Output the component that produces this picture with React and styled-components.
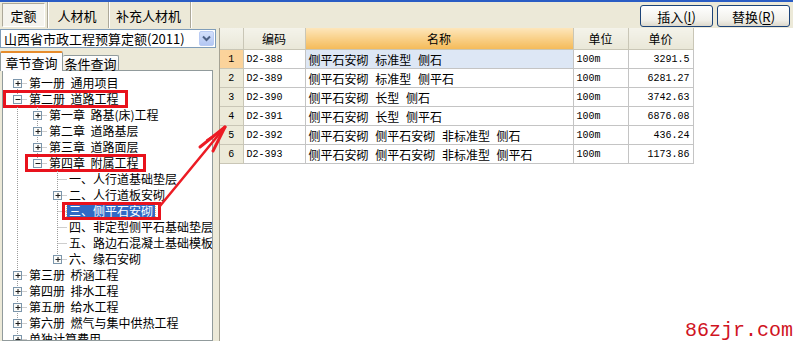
import React from 'react';
import styled, { createGlobalStyle } from 'styled-components';

const GlobalStyle = createGlobalStyle`
  html, body {
    margin: 0;
    padding: 0;
    background: #fff;
  }
  body {
    font-family: "Noto Sans CJK SC", "Noto Sans", sans-serif;
    font-size: 12px;
    color: #000;
  }
`;

const mainTabs = [
    { label: '定额', width: 46, active: true },
    { label: '人材机', width: 61 },
    { label: '补充人材机', width: 82 },
];

const tree = [
    { label: '第一册  通用项目', children: true },
    {
        label: '第二册  道路工程', open: true, mark: [0, 125],
        children: [
            { label: '第一章  路基(床)工程', children: true },
            { label: '第二章  道路基层', children: true },
            { label: '第三章  道路面层', children: true },
            {
                label: '第四章  附属工程', open: true, mark: [22, 121],
                children: [
                    { label: '一、人行道基础垫层' },
                    { label: '二、人行道板安砌', children: true },
                    { label: '三、侧平石安砌', selected: true, mark: [59, 99] },
                    { label: '四、非定型侧平石基础垫层' },
                    { label: '五、路边石混凝土基础模板' },
                    { label: '六、缘石安砌', children: true },
                ],
            },
        ],
    },
    { label: '第三册  桥涵工程', children: true },
    { label: '第四册  排水工程', children: true },
    { label: '第五册  给水工程', children: true },
    { label: '第六册  燃气与集中供热工程', children: true },
    { label: '单独计算费用', children: true, more: true },
];

const rows = [
    ['D2-388', '侧平石安砌 标准型 侧石', '100m', '3291.5'],
    ['D2-389', '侧平石安砌 标准型 侧平石', '100m', '6281.27'],
    ['D2-390', '侧平石安砌 长型 侧石', '100m', '3742.63'],
    ['D2-391', '侧平石安砌 长型 侧平石', '100m', '6876.08'],
    ['D2-392', '侧平石安砌 侧平石安砌 非标准型 侧石', '100m', '436.24'],
    ['D2-393', '侧平石安砌 侧平石安砌 非标准型 侧平石', '100m', '1173.86'],
];

// turn the nested tree into visible rows, keeping which guide lines run through each row
const flatten = (nodes, level, guides, out) => {
    nodes.forEach((node, i) => {
        const last = i === nodes.length - 1 && !node.more;
        out.push({ ...node, level, guides, last, first: level === 0 && i === 0 });
        if (node.open && Array.isArray(node.children)) {
            flatten(node.children, level + 1, [...guides, !last], out);
        }
    });
    return out;
};

const treeRows = flatten(tree, 0, [], []);

const DOT = '#9c9c9c';

const Connector = ({ level, guides, first, last, children, open }) => {
    const w = 24 + level * 20;
    const xc = 14.5 + level * 20;
    return (
        <svg width={w} height={16} style={{ flex: 'none' }}>
            {guides.map((g, d) => g && (
                <line key={d} x1={14.5 + d * 20} x2={14.5 + d * 20} y1={0} y2={16}
                      stroke={DOT} strokeDasharray="1 1"/>
            ))}
            <line x1={xc} x2={xc} y1={first ? 8 : 0} y2={last ? 8 : 16} stroke={DOT} strokeDasharray="1 1"/>
            <line x1={xc} x2={w} y1={8.5} y2={8.5} stroke={DOT} strokeDasharray="1 1"/>
            {children && (
                <g>
                    <rect x={xc - 4} y={4.5} width={8} height={8} fill="#fbfbf8" stroke="#7c96ac"/>
                    <line x1={xc - 2} x2={xc + 3} y1={8.5} y2={8.5} stroke="#1a1a1a"/>
                    {!open && <line x1={xc + 0.5} x2={xc + 0.5} y1={6} y2={11} stroke="#1a1a1a"/>}
                </g>
            )}
        </svg>
    );
};

const App = () => {
    return (
        <>
            <GlobalStyle/>
            <Root>
                <TitleLine/>
                <TopBar>
                    <MainTabs>
                        {mainTabs.map(tab =>
                            <TabCell $w={tab.width} key={tab.label}>
                                <TabFace $active={tab.active}>{tab.label}</TabFace>
                            </TabCell>
                        )}
                    </MainTabs>
                    <Actions>
                        <Button>插入(<u>I</u>)</Button>
                        <Button>替换(<u>R</u>)</Button>
                    </Actions>
                </TopBar>
                <Body>
                    <LeftPanel>
                        <Combo>
                            <ComboText>山西省市政工程预算定额(2011)</ComboText>
                            <ComboButton>
                                <svg width="9" height="7" viewBox="0 0 9 7">
                                    <path d="M1 1.5 L4.5 5 L8 1.5" fill="none" stroke="#4d6185" strokeWidth="2"/>
                                </svg>
                            </ComboButton>
                        </Combo>
                        <SubTabs>
                            <SubTab $active>章节查询</SubTab>
                            <SubTab>条件查询</SubTab>
                        </SubTabs>
                        <TreeBox>
                            {treeRows.map((row, key) =>
                                <TreeRow key={key}>
                                    <Connector {...row}/>
                                    <TreeLabel $selected={row.selected}>{row.label}</TreeLabel>
                                    {row.mark && <Mark $left={row.mark[0]} $width={row.mark[1]}/>}
                                </TreeRow>
                            )}
                        </TreeBox>
                    </LeftPanel>
                    <GridArea>
                        <Table>
                            <colgroup>
                                <col style={{ width: 23 }}/>
                                <col style={{ width: 62 }}/>
                                <col style={{ width: 268 }}/>
                                <col style={{ width: 55 }}/>
                                <col style={{ width: 65 }}/>
                            </colgroup>
                            <thead>
                                <tr>
                                    <HeadCell/>
                                    <HeadCell>编码</HeadCell>
                                    <HeadCell $active>名称</HeadCell>
                                    <HeadCell>单位</HeadCell>
                                    <HeadCell>单价</HeadCell>
                                </tr>
                            </thead>
                            <tbody>
                                {rows.map((row, i) =>
                                    <tr key={row[0]}>
                                        <NumCell $current={i === 0}>{i + 1}</NumCell>
                                        <Cell $mono>{row[0]}</Cell>
                                        <Cell $current={i === 0}>{row[1]}</Cell>
                                        <Cell $mono>{row[2]}</Cell>
                                        <Cell $mono $right>{row[3]}</Cell>
                                    </tr>
                                )}
                            </tbody>
                        </Table>
                        <Watermark>86zjr.com</Watermark>
                    </GridArea>
                </Body>
                <Arrow width="793" height="341" viewBox="0 0 793 341">
                    <g stroke="#ec1c24" strokeLinecap="round" fill="none">
                        <line x1="160" y1="206" x2="225" y2="127" strokeWidth="2.5"/>
                        <line x1="200" y1="147" x2="225" y2="127" strokeWidth="3"/>
                        <line x1="213" y1="151" x2="225" y2="127" strokeWidth="3"/>
                        <line x1="207" y1="140" x2="224" y2="129" strokeWidth="2"/>
                    </g>
                </Arrow>
            </Root>
        </>
    );
};

export default App;


const Root = styled.div`
    position: relative;
    width: 793px;
    height: 341px;
    overflow: hidden;
    display: flex;
    flex-direction: column;
    background: #ece9d8;
`;

const TitleLine = styled.div`
    height: 2px;
    background: #2a5cc4;
    flex: none;
`;

const TopBar = styled.div`
    height: 26px;
    flex: none;
    display: flex;
    justify-content: space-between;
`;

const MainTabs = styled.div`
    display: flex;
    padding-left: 2px;
`;

const TabCell = styled.div`
    width: ${props => props.$w}px;
    box-sizing: border-box;
    display: flex;
    padding: 1px 2px 1px 0;
    border-right: 1px solid #aca899;
    box-shadow: 1px 0 0 #fff;
`;

const TabFace = styled.div`
    flex: 1;
    display: flex;
    align-items: center;
    justify-content: center;
    font-size: 13px;
    border: 1px solid transparent;
    ${props => props.$active && `
        border-color: #aca899 #fff #fff #aca899;
        background: #f5f4ee;
    `}
`;

const Actions = styled.div`
    display: flex;
    gap: 4px;
    padding: 3px 3px 0 0;
`;

const Button = styled.div`
    width: 73px;
    height: 22px;
    box-sizing: border-box;
    border: 1px solid #1c4378;
    border-radius: 3px;
    background: linear-gradient(#ffffff, #f1f0ea 70%, #dcd8cb);
    display: flex;
    align-items: center;
    justify-content: center;
    font-size: 13px;
    
    u {
        text-underline-offset: 2px;
    }
`;

const Body = styled.div`
    flex: 1;
    min-height: 0;
    display: flex;
`;

const LeftPanel = styled.div`
    width: 216px;
    flex: none;
    display: flex;
    flex-direction: column;
    padding-top: 1px;
`;

const Combo = styled.div`
    height: 19px;
    box-sizing: border-box;
    border: 1px solid #7f9db9;
    background: #fff;
    display: flex;
    align-items: center;
`;

const ComboText = styled.div`
    flex: 1;
    padding-left: 3px;
    font-size: 13px;
    line-height: 17px;
    white-space: nowrap;
`;

const ComboButton = styled.div`
    width: 15px;
    height: 15px;
    margin-right: 1px;
    border-radius: 2px;
    background: linear-gradient(#d4e0fb, #b3c7f3);
    border: 1px solid #b9cbf3;
    box-sizing: border-box;
    display: flex;
    align-items: center;
    justify-content: center;
`;

const SubTabs = styled.div`
    height: 19px;
    margin-top: 3px;
    display: flex;
    align-items: flex-end;
    position: relative;
    z-index: 1;
`;

const SubTab = styled.div`
    box-sizing: border-box;
    font-size: 13px;
    display: flex;
    align-items: center;
    justify-content: center;
    border: 1px solid #919b9c;
    border-bottom: none;
    border-radius: 2px 2px 0 0;
    white-space: nowrap;
    ${props => props.$active ? `
        width: 63px;
        height: 20px;
        margin-bottom: -1px;
        background: #fcfcfe;
        border-top: 2px solid #e68b2c;
    ` : `
        width: 56px;
        height: 15px;
        border-left: none;
        background: linear-gradient(#ffffff, #ecebe6);
    `}
`;

const TreeBox = styled.div`
    flex: 1;
    margin: 0 3px 0 2px;
    background: #fff;
    border: 1px solid #919b9c;
    padding-top: 4px;
    overflow: hidden;
`;

const TreeRow = styled.div`
    position: relative;
    height: 16px;
    display: flex;
    align-items: center;
`;

const TreeLabel = styled.div`
    height: 14px;
    line-height: 14px;
    padding: 0 2px;
    font-size: 12px;
    white-space: pre;
    ${props => props.$selected && `
        background: #316ac5;
        color: #fff;
        outline: 1px dotted #f2c07a;
    `}
`;

const Mark = styled.div`
    position: absolute;
    top: -1px;
    bottom: -1px;
    left: ${props => props.$left}px;
    width: ${props => props.$width}px;
    border: 3px solid #e8121c;
    box-sizing: border-box;
`;

const GridArea = styled.div`
    flex: 1;
    position: relative;
    margin-left: 3px;
    background: #fff;
    border-left: 1px solid #a5a293;
    overflow: hidden;
`;

const Table = styled.table`
    border-collapse: collapse;
    table-layout: fixed;
    width: 473px;
`;

const HeadCell = styled.th`
    height: 21px;
    padding: 0;
    font-weight: normal;
    font-size: 12px;
    text-align: center;
    border: 1px solid #c9c6b6;
    border-top: none;
    border-left: none;
    background: ${props => props.$active
        ? 'linear-gradient(#fde6bb, #f8cc7f 60%, #f4bb5a)'
        : 'linear-gradient(#f4f3ea, #e9e7d8)'};
`;

const NumCell = styled.td`
    height: 18px;
    padding: 0;
    text-align: center;
    font-family: "Liberation Mono", monospace;
    font-size: 10px;
    border: 1px solid #c9c6b6;
    border-left: none;
    background: ${props => props.$current ? '#fbd39b' : '#ecead9'};
`;

const Cell = styled.td`
    height: 18px;
    padding: 0 3px;
    white-space: pre;
    overflow: hidden;
    text-align: ${props => props.$right ? 'right' : 'left'};
    font-family: ${props => props.$mono ? '"Liberation Mono", monospace' : '"Noto Sans CJK SC", sans-serif'};
    font-size: ${props => props.$mono ? '10px' : '12px'};
    word-spacing: ${props => props.$mono ? '0' : '4px'};
    border: 1px solid #c4c4c4;
    background: ${props => props.$current ? '#dde7f5' : '#fff'};
`;

const Watermark = styled.div`
    position: absolute;
    right: 0;
    bottom: -1px;
    font-family: "Liberation Mono", "Courier New", monospace;
    font-size: 20px;
    line-height: 22px;
    color: #d0141f;
`;

const Arrow = styled.svg`
    position: absolute;
    left: 0;
    top: 0;
    pointer-events: none;
`;
